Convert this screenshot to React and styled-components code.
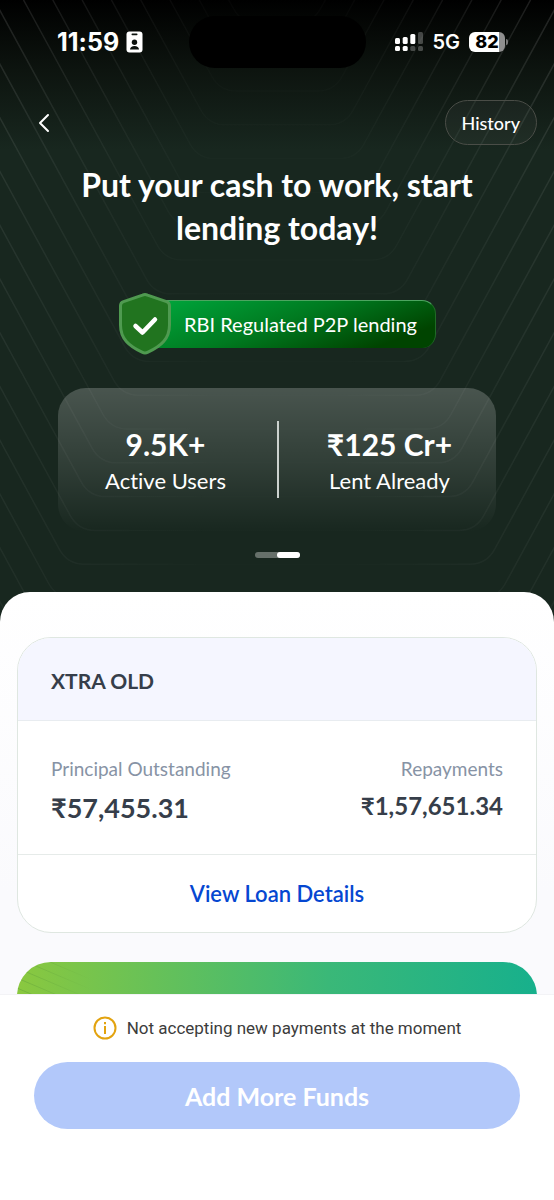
import React from 'react';
import styled, { createGlobalStyle } from 'styled-components';

const stats = [
    { id: 1, value: '9.5K+', label: 'Active Users' },
    { id: 2, value: '₹125 Cr+', label: 'Lent Already' },
];

const loan = {
    name: 'XTRA OLD',
    principal: '₹57,455.31',
    repayments: '₹1,57,651.34',
};

// one nested, rounded "V" outline of the hero pattern
const patternLine = (k) => {
    const bottom = 91 + k * 33.8;
    const top = 170 - k * 29.3;
    const x = top + bottom * 0.545;
    return `M${top} 0 L${x - 8} ${bottom - 15} Q${x} ${bottom} ${x + 17} ${bottom} H${537 - x} Q${554 - x} ${bottom} ${562 - x} ${bottom - 15} L${554 - top} 0`;
};

const lines = Array.from({ length: 20 }, (_, i) => i - 2);

const HeroPattern = () => (
    <Pattern viewBox="0 0 554 622" preserveAspectRatio="xMidYMin slice" aria-hidden="true">
        <defs>
            <linearGradient id="lines" gradientUnits="userSpaceOnUse" x1="0" y1="0" x2="554" y2="0">
                <stop offset="0" stopColor="#fff" stopOpacity="0.12" />
                <stop offset="0.25" stopColor="#fff" stopOpacity="0.05" />
                <stop offset="0.38" stopColor="#fff" stopOpacity="0.02" />
                <stop offset="0.62" stopColor="#fff" stopOpacity="0.02" />
                <stop offset="0.75" stopColor="#fff" stopOpacity="0.05" />
                <stop offset="1" stopColor="#fff" stopOpacity="0.13" />
            </linearGradient>
            <linearGradient id="fade" x1="0" y1="0" x2="0" y2="1">
                <stop offset="0" stopColor="#fff" />
                <stop offset="0.3" stopColor="#999" />
                <stop offset="1" stopColor="#555" />
            </linearGradient>
            <mask id="fadeMask">
                <rect width="554" height="622" fill="url(#fade)" />
            </mask>
        </defs>
        <g fill="none" stroke="url(#lines)" strokeWidth="1.5" mask="url(#fadeMask)">
            {lines.map(k => <path key={k} d={patternLine(k)} />)}
        </g>
    </Pattern>
);

const BadgeIcon = () => (
    <svg width="17" height="22" viewBox="0 0 17 22" aria-hidden="true">
        <rect x="0.5" y="0.5" width="16" height="21" rx="3" fill="#fff" />
        <rect x="5.5" y="2.6" width="6" height="1.6" rx="0.8" fill="#0c120e" />
        <circle cx="8.5" cy="11.3" r="2.7" fill="#0c120e" />
        <path d="M4 18.6c0-2.4 2-3.6 4.5-3.6s4.5 1.2 4.5 3.6z" fill="#0c120e" />
    </svg>
);

const SignalIcon = () => (
    <svg width="28" height="20" viewBox="0 0 28 20" fill="#fff" aria-hidden="true">
        <rect x="0" y="6" width="5" height="6" rx="1.5" />
        <rect x="7.7" y="5" width="5" height="7" rx="1.5" />
        <rect x="15.3" y="2" width="5" height="10" rx="1.5" />
        <rect x="23" y="0" width="5" height="12" rx="1.5" opacity="0.25" />
        <rect x="0" y="14" width="5" height="5" rx="1.5" />
        <rect x="7.7" y="14" width="5" height="5" rx="1.5" />
        <rect x="15.3" y="14" width="5" height="5" rx="1.5" opacity="0.25" />
        <rect x="23" y="14" width="5" height="5" rx="1.5" opacity="0.25" />
    </svg>
);

const BackIcon = () => (
    <svg width="12" height="20" viewBox="0 0 12 20" fill="none" stroke="#fff" strokeWidth="2" strokeLinecap="round" strokeLinejoin="round" aria-hidden="true">
        <path d="M10 2 L2 10 L10 18" />
    </svg>
);

const ShieldIcon = () => (
    <ShieldSvg viewBox="0 0 54 62" aria-hidden="true">
        <path
            d="M24.5 2.2Q27 1 29.5 2.2L48.500 8.600Q51.500 9.600 51.500 12.800V32C51.500 46 43 53 30 59.200Q27 60.600 24 59.200C11 53 2.500 46 2.500 32V12.800Q2.500 9.600 5.500 8.600Z"
            fill="#21741f"
            stroke="#4f9a50"
            strokeWidth="3"
        />
        <path d="M17.5 33L24.5 39.5L37 26.5" fill="none" stroke="#fff" strokeWidth="4.5" strokeLinecap="round" strokeLinejoin="round" />
    </ShieldSvg>
);

const InfoIcon = () => (
    <svg width="24" height="24" viewBox="0 0 24 24" fill="none" stroke="#e3a30f" strokeWidth="2" aria-hidden="true">
        <circle cx="12" cy="12" r="10.5" />
        <path d="M12 10V18M12 6V8.2" />
    </svg>
);

const App = () => {
    return (
        <Screen>
            <GlobalStyle />
            <Content>
                <Hero>
                    <HeroPattern />
                    <StatusBar>
                        <StatusTime>
                            11:59
                            <BadgeIcon />
                        </StatusTime>
                        <Island />
                        <StatusRight>
                            <SignalIcon />
                            <span>5G</span>
                            <Battery>82</Battery>
                        </StatusRight>
                    </StatusBar>
                    <NavBar>
                        <BackButton type="button" aria-label="Back">
                            <BackIcon />
                        </BackButton>
                        <HistoryButton type="button">History</HistoryButton>
                    </NavBar>
                    <Title>Put your cash to work, start lending today!</Title>
                    <Regulated>
                        <ShieldIcon />
                        <RegulatedText>RBI Regulated P2P lending</RegulatedText>
                    </Regulated>
                    <Stats>
                        {stats.map(item => (
                            <Stat key={item.id}>
                                <StatValue>{item.value}</StatValue>
                                <StatLabel>{item.label}</StatLabel>
                            </Stat>
                        ))}
                    </Stats>
                    <Pager>
                        <PagerThumb />
                    </Pager>
                </Hero>
                <Sheet>
                    <LoanCard>
                        <LoanHeader>{loan.name}</LoanHeader>
                        <LoanBody>
                            <Figure>
                                <FigureLabel>Principal Outstanding</FigureLabel>
                                <FigureValue $size={27} $line={40}>{loan.principal}</FigureValue>
                            </Figure>
                            <Figure $end>
                                <FigureLabel>Repayments</FigureLabel>
                                <FigureValue $size={24} $line={36}>{loan.repayments}</FigureValue>
                            </Figure>
                        </LoanBody>
                        <LoanLink href="#loan">View Loan Details</LoanLink>
                    </LoanCard>
                    <Banner>
                        <svg width="120" height="90" viewBox="0 0 120 90" fill="none" stroke="url(#bannerLines)" aria-hidden="true">
                            <defs>
                                <linearGradient id="bannerLines" gradientUnits="userSpaceOnUse" x1="0" y1="0" x2="75" y2="0">
                                    <stop offset="0" stopColor="#5f9f3a" stopOpacity="0.5" />
                                    <stop offset="1" stopColor="#5f9f3a" stopOpacity="0" />
                                </linearGradient>
                            </defs>
                            {[-14, -4, 6, 16, 26, 36].map(y => (
                                <path key={y} d={`M0 ${y}L80 ${y + 34}`} />
                            ))}
                        </svg>
                    </Banner>
                </Sheet>
            </Content>
            <Footer>
                <Notice>
                    <InfoIcon />
                    Not accepting new payments at the moment
                </Notice>
                <FundsButton type="button" disabled>Add More Funds</FundsButton>
            </Footer>
        </Screen>
    );
}

const GlobalStyle = createGlobalStyle`
    * {
        box-sizing: border-box;
    }
    body {
        margin: 0;
        font-family: Lato, "Noto Sans", sans-serif;
        font-variant-ligatures: none;
        background: #fff;
    }
    button {
        font-family: inherit;
        cursor: pointer;
    }
`;

const Screen = styled.div`
    display: flex;
    flex-direction: column;
    height: 100vh;
`;

const Content = styled.main`
    flex: 1;
    min-height: 0;
    overflow-y: auto;
    scrollbar-width: none;
`;

const Hero = styled.section`
    position: relative;
    isolation: isolate;
    display: flex;
    flex-direction: column;
    align-items: center;
    padding: 16px 17px 64px;
    color: #fff;
    background: linear-gradient(#000 0, #0d140f 70px, #18271f 150px, #18271f 100%);
`;

const Pattern = styled.svg`
    position: absolute;
    inset: 0;
    width: 100%;
    height: 100%;
    z-index: -1;
`;

const StatusBar = styled.div`
    display: grid;
    grid-template-columns: 1fr auto 1fr;
    align-items: center;
    width: 100%;
    padding: 0 32px 0 32px;
    font-family: Inter, sans-serif;
`;

const StatusTime = styled.div`
    display: flex;
    align-items: center;
    gap: 7px;
    padding-left: 8px;
    font-size: 25px;
    font-weight: 700;
    line-height: 52px;
`;

const Island = styled.div`
    width: 177px;
    height: 52px;
    border-radius: 26px;
    background: #000;
`;

const StatusRight = styled.div`
    display: flex;
    align-items: center;
    justify-content: flex-end;
    gap: 9px;
    font-size: 20px;
    font-weight: 600;
`;

const Battery = styled.div`
    position: relative;
    width: 36px;
    height: 20px;
    border-radius: 6px;
    background: linear-gradient(90deg, #fff 82%, #8f8f8f 82%);
    color: #000;
    font-size: 18px;
    font-weight: 800;
    line-height: 20px;
    text-align: center;

    &::after {
        content: '';
        position: absolute;
        top: 7px;
        right: -3px;
        width: 2px;
        height: 6px;
        border-radius: 0 2px 2px 0;
        background: #777;
    }
`;

const NavBar = styled.nav`
    display: flex;
    align-items: center;
    justify-content: space-between;
    width: 100%;
    margin-top: 32px;
`;

const BackButton = styled.button`
    display: flex;
    padding: 12px 21px;
    border: 0;
    background: none;
`;

const HistoryButton = styled.button`
    height: 45px;
    padding: 0 16px;
    border: 1px solid #4a4d47;
    border-radius: 23px;
    background: rgba(255, 255, 255, 0.04);
    color: #fff;
    font-size: 18px;
    font-weight: 500;
`;

const Title = styled.h1`
    max-width: 440px;
    margin: 18px 0 0;
    font-size: 32px;
    font-weight: 700;
    line-height: 43px;
    text-align: center;
`;

const Regulated = styled.div`
    display: flex;
    align-items: center;
    margin-top: 44px;
`;

const ShieldSvg = styled.svg`
    position: relative;
    width: 54px;
    height: 62px;
    margin-right: -16px;
`;

const RegulatedText = styled.div`
    height: 48px;
    padding: 0 18px 0 28px;
    border-top: 1px solid #4da560;
    border-right: 1px solid #1f6b26;
    border-radius: 0 14px 14px 0;
    background: linear-gradient(160deg, #00a63c 0%, #007a20 45%, #004400 85%);
    font-size: 20px;
    line-height: 47px;
`;

const Stats = styled.div`
    display: grid;
    grid-template-columns: 1fr 1fr;
    width: calc(100% - 82px);
    margin-top: 33px;
    padding: 33px 0 34px;
    border-radius: 28px;
    background: linear-gradient(rgba(255, 255, 255, 0.21), rgba(255, 255, 255, 0.1) 55%, rgba(255, 255, 255, 0));
    text-align: center;
`;

const Stat = styled.div`
    padding: 3px 4px 0 0;

    & + & {
        padding: 3px 0 0 4px;
        border-left: 2px solid #ccd2ce;
    }
`;

const StatValue = styled.div`
    font-size: 30px;
    font-weight: 700;
    line-height: 40px;
`;

const StatLabel = styled.div`
    font-size: 22px;
    line-height: 34px;
`;

const Pager = styled.div`
    width: 45px;
    height: 6px;
    margin-top: 20px;
    border-radius: 3px;
    background: #66706a;
`;

const PagerThumb = styled.div`
    width: 23px;
    height: 6px;
    margin-left: auto;
    border-radius: 3px;
    background: #fff;
`;

const Sheet = styled.section`
    position: relative;
    margin-top: -30px;
    padding: 45px 17px 24px;
    border-radius: 30px 30px 0 0;
    background: linear-gradient(#fff 0, #fafafd 300px);
`;

const LoanCard = styled.article`
    overflow: hidden;
    border: 1px solid #dfe7e1;
    border-radius: 34px;
    background: #fff;
    color: #363e4a;
`;

const LoanHeader = styled.h2`
    margin: 0;
    padding: 4px 33px 0;
    background: #f5f6ff;
    font-size: 21px;
    font-weight: 700;
    line-height: 78px;
`;

const LoanBody = styled.div`
    display: flex;
    justify-content: space-between;
    padding: 34px 33px 26px;
    border-top: 1px solid #e8ecf0;
    border-bottom: 1px solid #e6ebe9;
`;

const Figure = styled.div`
    text-align: ${props => (props.$end ? 'right' : 'left')};
`;

const FigureLabel = styled.div`
    color: #8793a5;
    font-size: 19px;
    line-height: 28px;
`;

const FigureValue = styled.div`
    margin-top: 5px;
    font-size: ${props => props.$size}px;
    font-weight: 700;
    line-height: ${props => props.$line}px;
`;

const LoanLink = styled.a`
    display: block;
    color: #0547d1;
    font-size: 22px;
    font-weight: 600;
    line-height: 77px;
    text-align: center;
    text-decoration: none;
`;

const Banner = styled.div`
    height: 120px;
    margin-top: 29px;
    overflow: hidden;
    border-radius: 34px;
    background: linear-gradient(90deg, #8ac83f, #3ab878 60%, #17b08c);
`;

const Footer = styled.footer`
    padding: 21px 34px 71px;
    background: #fff;
    border-top: 1px solid #f3f3f6;
`;

const Notice = styled.p`
    display: flex;
    align-items: center;
    justify-content: center;
    gap: 10px;
    margin: 0;
    color: #3c3c3c;
    font-family: Roboto, sans-serif;
    font-size: 17px;
    line-height: 24px;
`;

const FundsButton = styled.button`
    width: 100%;
    height: 67px;
    margin-top: 22px;
    border: 0;
    border-radius: 34px;
    background: #b2c8fa;
    color: #fff;
    font-size: 25px;
    font-weight: 700;
`;

export default App;
